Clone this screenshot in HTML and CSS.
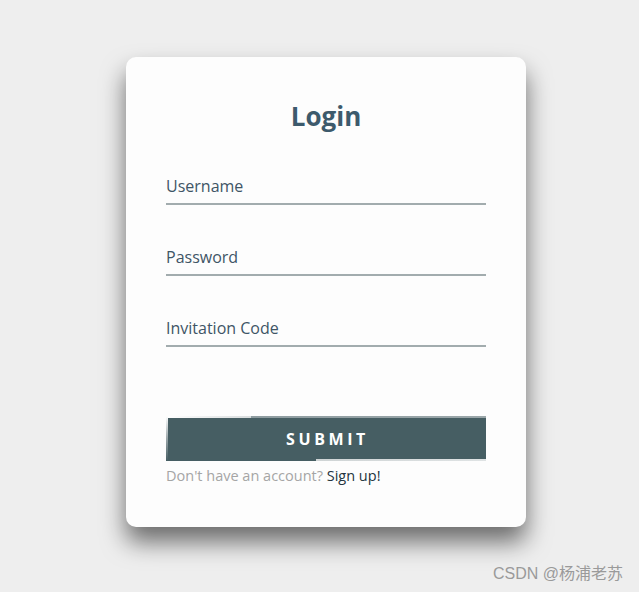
FILE: index.html
```html
<!DOCTYPE html>
<html lang="en">
<head>
<meta charset="utf-8">
<title>Login</title>
<link rel="stylesheet" href="styles.css">
</head>
<body>
<main class="page">
  <form class="card">
    <h2 class="title">Login</h2>
    <div class="field"><span class="label">Username</span></div>
    <div class="field"><span class="label">Password</span></div>
    <div class="field"><span class="label">Invitation Code</span></div>
    <button type="button" class="submit">
      <span class="edge edge-top"></span>
      <span class="edge edge-left"></span>
      <span class="edge edge-bottom"></span>
      SUBMIT
    </button>
    <p class="foot">Don't have an account? <a class="signup">Sign up!</a></p>
  </form>
</main>
<div class="mark">CSDN @杨浦老苏</div>
</body>
</html>
```
FILE: styles.css
```css
html, body {
  margin: 0;
  padding: 0;
}
body {
  background: #eeeeee;
  font-family: "Open Sans", "Noto Sans", "Noto Sans CJK SC", sans-serif;
  width: 639px;
  height: 592px;
  overflow: hidden;
  position: relative;
}
.page {
  padding: 57px 0 0 126px;
}
.card {
  box-sizing: border-box;
  width: 400px;
  height: 470px;
  background: #fdfdfd;
  border-radius: 10px;
  padding: 40px 40px 0;
  box-shadow: 0 15px 25px rgba(0, 0, 0, 0.55);
  display: flex;
  flex-direction: column;
}
.title {
  margin: 0;
  text-align: center;
  font-size: 26px;
  line-height: 38px;
  font-weight: 700;
  color: #3d5a6c;
}
.field {
  height: 30px;
  border-bottom: 2px solid #a2acae;
  margin-top: 39px;
  line-height: 26px;
  font-size: 16px;
  color: #3f5566;
}
.field:first-of-type {
  margin-top: 38px;
}
.submit {
  position: relative;
  margin-top: 69px;
  height: 45px;
  width: 320px;
  border: none;
  padding: 0 0 0 3px;
  background: #465e63;
  color: #ffffff;
  font-family: inherit;
  font-size: 16px;
  font-weight: 700;
  letter-spacing: 3.6px;
  overflow: hidden;
}
.edge {
  position: absolute;
  display: block;
}
.edge-top {
  top: 0;
  left: 0;
  width: 100%;
  height: 2px;
  background: linear-gradient(90deg, #ffffff 0, #d8dcdd 85px, #8e9ca0 85px, #9aa6a9 100%);
}
.edge-left {
  top: 0;
  left: 0;
  width: 2px;
  height: 100%;
  background: linear-gradient(180deg, #ffffff 0%, #9aa6a9 50%, #465e63 100%);
}
.edge-bottom {
  bottom: 0;
  right: 0;
  width: 170px;
  height: 2px;
  background: linear-gradient(90deg, #cfd4d5, #dfe3e4);
}
.foot {
  margin: 5px 0 0;
  font-size: 14.5px;
  line-height: 20px;
  color: #a5a5a5;
}
.signup {
  color: #24343e;
}
.mark {
  position: absolute;
  right: 16px;
  bottom: 8px;
  font-family: "Liberation Sans", "Noto Sans CJK SC", sans-serif;
  font-size: 16px;
  color: #9a9a9a;
}
```
